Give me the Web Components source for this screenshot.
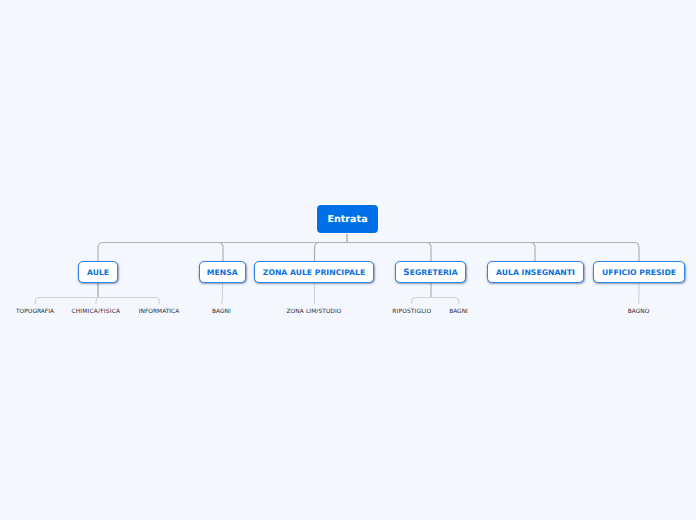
<!DOCTYPE html>
<html>
<head>
<meta charset="utf-8">
<title>Entrata</title>
<style>
  html, body { margin: 0; height: 100%; background: #f4f7fe; }
  .big { font-size: 8.8px; }
</style>
</head>
<body>
<mind-map>
  <map-lines></map-lines>
  <map-root style="--x:317px;--y:205px;--w:61px;--h:28px">Entrata</map-root>

  <map-topic style="--x:78px;--y:261px;--w:40px">AULE</map-topic>
  <map-topic style="--x:198.5px;--y:261px;--w:47.5px">MENSA</map-topic>
  <map-topic style="--x:254px;--y:261px;--w:120px">ZONA AULE PRINCIPALE</map-topic>
  <map-topic style="--x:395px;--y:261px;--w:71px;--dy:0.5px"><span class="big">S</span>EGRETERIA</map-topic>
  <map-topic style="--x:487px;--y:261px;--w:97px;--dy:0.5px">AULA INSEGNANTI</map-topic>
  <map-topic style="--x:593px;--y:261px;--w:92px;--dy:0.5px">UFFICIO PRESIDE</map-topic>

  <map-leaf style="--cx:35px">TOPOGRAFIA</map-leaf>
  <map-leaf style="--cx:95.8px;--ls:0.2px">CHIMICA/FISICA</map-leaf>
  <map-leaf style="--cx:159px">INFORMATICA</map-leaf>
  <map-leaf style="--cx:221.3px">BAGNI</map-leaf>
  <map-leaf style="--cx:314px;--ls:0.1px">ZONA LIM/STUDIO</map-leaf>
  <map-leaf style="--cx:411.8px;--ls:0.15px">RIPOSTIGLIO</map-leaf>
  <map-leaf style="--cx:458.5px">BAGNI</map-leaf>
  <map-leaf style="--cx:638.5px">BAGNO</map-leaf>
</mind-map>

<script>
class MindMap extends HTMLElement {
  connectedCallback() {
    this.attachShadow({ mode: 'open' });
    this.shadowRoot.innerHTML = `
      <style>
        :host {
          display: block;
          position: relative;
          width: 696px;
          height: 520px;
          overflow: hidden;
          background: #f4f7fe;
          font-family: "DejaVu Sans", sans-serif;
          text-rendering: geometricPrecision;
        }
      </style>
      <slot></slot>
    `;
  }
}

// connectors between the topics, the map is a free canvas
class MapLines extends HTMLElement {
  connectedCallback() {
    this.attachShadow({ mode: 'open' });
    this.shadowRoot.innerHTML = `
      <style>
        :host { position: absolute; left: 0; top: 0; }
        svg { display: block; }
        .main { fill: none; stroke: #aeb0b5; stroke-width: 1.2; }
        .sub { fill: none; stroke: #cfd1d8; stroke-width: 1.1; }
        .thick { fill: none; stroke: #b2b4ba; stroke-width: 1.6; }
      </style>
      <svg width="696" height="520" viewBox="0 0 696 520">
        <path class="thick" d="M347 233V242.5"/>
        <path class="main" d="M98 261V247.5Q98 242.5 103 242.5H634Q639 242.5 639 247.5V261"/>
        <path class="main" d="M218 242.5Q223 242.5 223 247.5V261"/>
        <path class="main" d="M319.5 242.5Q314.5 242.5 314.5 247.5V261"/>
        <path class="main" d="M426 242.5Q431 242.5 431 247.5V261"/>
        <path class="main" d="M530 242.5Q535 242.5 535 247.5V261"/>

        <path class="thick" d="M98 283V297"/>
        <path class="sub" d="M35.2 304V301.5Q35.2 297.5 39.5 297.5H155Q159.2 297.5 159.2 301.5V304"/>
        <path class="sub" d="M97 297.5Q96 299 96 304"/>
        <path class="sub" d="M222.5 283V296Q222.5 300 221.7 304"/>
        <path class="sub" d="M314.5 283V304"/>
        <path class="main" d="M431 283V297"/>
        <path class="sub" d="M411.7 304V301.5Q411.7 297.5 416 297.5H454.5Q458.7 297.5 458.7 301.5V304"/>
        <path class="sub" d="M639 283V296Q639 300 638.5 304"/>
      </svg>
    `;
  }
}

class MapRoot extends HTMLElement {
  connectedCallback() {
    this.attachShadow({ mode: 'open' });
    this.shadowRoot.innerHTML = `
      <style>
        :host {
          position: absolute;
          left: var(--x);
          top: var(--y);
          width: var(--w);
          height: var(--h);
          box-sizing: border-box;
          display: flex;
          align-items: center;
          justify-content: center;
          background: #0070e8;
          border-radius: 4px;
          color: #fff;
          font-size: 9.6px;
          font-weight: 700;
          box-shadow: 0 0 0 1px #fff;
        }
      </style>
      <slot></slot>
    `;
  }
}

class MapTopic extends HTMLElement {
  connectedCallback() {
    this.attachShadow({ mode: 'open' });
    this.shadowRoot.innerHTML = `
      <style>
        :host {
          position: absolute;
          left: var(--x);
          top: var(--y);
          width: var(--w);
          height: 22px;
          box-sizing: border-box;
          display: flex;
          align-items: center;
          justify-content: center;
          background: #fff;
          border: 1.5px solid #2a84ea;
          border-radius: 5px;
          color: #0a70e0;
          font-size: 7.7px;
          font-weight: 700;
          white-space: nowrap;
          box-shadow: 0.5px 1px 2px rgba(40, 60, 100, 0.5);
        }
        span { position: relative; top: var(--dy, 0); }
      </style>
      <span><slot></slot></span>
    `;
  }
}

class MapLeaf extends HTMLElement {
  connectedCallback() {
    this.attachShadow({ mode: 'open' });
    this.shadowRoot.innerHTML = `
      <style>
        :host {
          position: absolute;
          left: var(--cx);
          top: 308px;
          transform: translateX(-50%);
          height: 8px;
          display: flex;
          align-items: center;
          color: #2b2e35;
          font-size: 5.9px;
          letter-spacing: var(--ls, 0);
          white-space: nowrap;
        }
      </style>
      <slot></slot>
    `;
  }
}

customElements.define('mind-map', MindMap);
customElements.define('map-lines', MapLines);
customElements.define('map-root', MapRoot);
customElements.define('map-topic', MapTopic);
customElements.define('map-leaf', MapLeaf);
</script>
</body>
</html>
